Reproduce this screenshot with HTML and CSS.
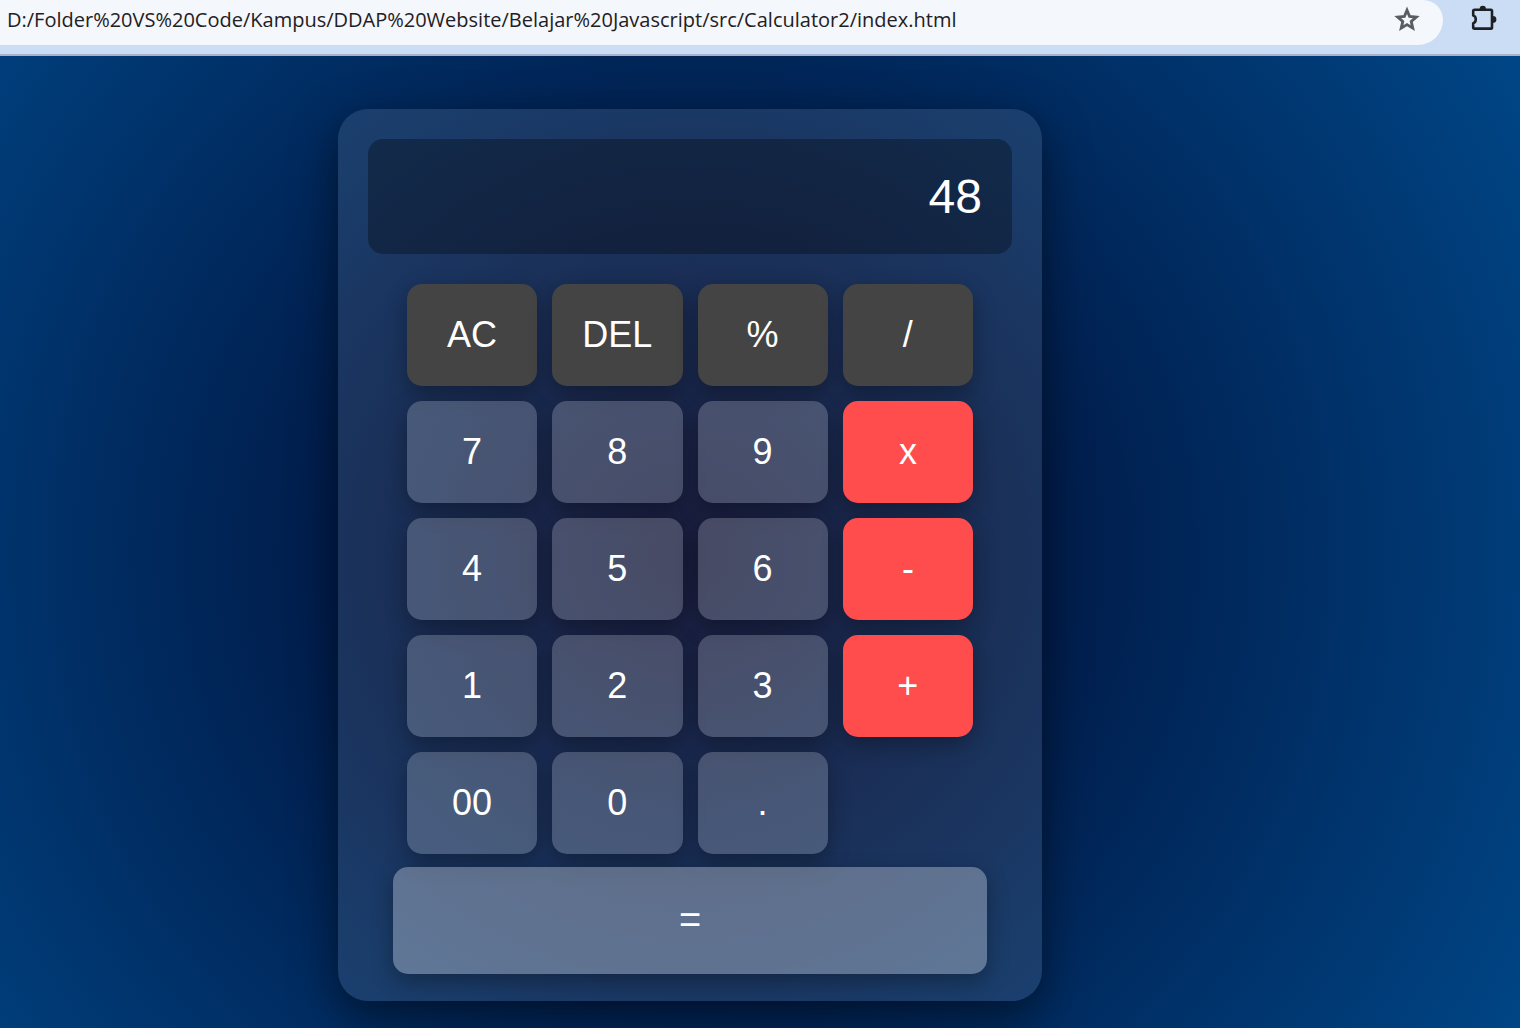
FILE: index.html
```html
<!DOCTYPE html>
<html lang="en">
<head>
  <meta charset="utf-8">
  <meta name="viewport" content="width=device-width, initial-scale=1">
  <title>Calculator</title>
  <link rel="stylesheet" href="styles.css">
</head>
<body>
  <header class="toolbar">
    <div class="address">
      <input class="address-input" type="text" aria-label="Address" value="D:/Folder%20VS%20Code/Kampus/DDAP%20Website/Belajar%20Javascript/src/Calculator2/index.html">
      <button class="icon-button" type="button" aria-label="Bookmark this page">
        <svg width="30" height="30" viewBox="0 0 24 24" aria-hidden="true">
          <path fill="none" stroke="#5b5d61" stroke-width="2.3" d="M12 4.2l2.1 5 5.3.5-4 3.5 1.2 5.3-4.6-2.8-4.6 2.8 1.2-5.3-4-3.5 5.3-.5z"/>
        </svg>
      </button>
    </div>
    <button class="icon-button" type="button" aria-label="Extensions">
      <svg width="28" height="28" viewBox="0 0 28 28" aria-hidden="true">
        <path fill="none" stroke="#1f2023" stroke-width="2.6" stroke-linejoin="round" d="M4.6 4.8H20.8Q22 4.8 22 6V22.4Q22 23.6 20.8 23.6H4.4Q3.2 23.6 3.2 22.4V18.2C6.6 17.4 6.6 11.2 3.2 10.4V6Q3.2 4.8 4.6 4.8Z"/>
        <path fill="#1f2023" d="M9.6 4.2a3.2 3.4 0 0 1 6.4 0zM22.8 11a3.6 3.4 0 0 1 0 6.8z"/>
      </svg>
    </button>
  </header>
  <main class="stage">
    <section class="calculator" aria-label="Calculator">
      <input class="display" type="text" aria-label="Result" value="48" readonly>
      <div class="keys">
        <button class="key key-function" type="button">AC</button>
        <button class="key key-function" type="button">DEL</button>
        <button class="key key-function" type="button">%</button>
        <button class="key key-function" type="button">/</button>
        <button class="key" type="button">7</button>
        <button class="key" type="button">8</button>
        <button class="key" type="button">9</button>
        <button class="key key-operator" type="button">x</button>
        <button class="key" type="button">4</button>
        <button class="key" type="button">5</button>
        <button class="key" type="button">6</button>
        <button class="key key-operator" type="button">-</button>
        <button class="key" type="button">1</button>
        <button class="key" type="button">2</button>
        <button class="key" type="button">3</button>
        <button class="key key-operator" type="button">+</button>
        <button class="key" type="button">00</button>
        <button class="key" type="button">0</button>
        <button class="key" type="button">.</button>
        <button class="key key-equals" type="button">=</button>
      </div>
    </section>
  </main>
</body>
</html>
```
FILE: styles.css
```css
* {
  box-sizing: border-box;
}

body {
  margin: 0;
  min-height: 100vh;
  display: flex;
  flex-direction: column;
  overflow-x: hidden;
  font-family: "Liberation Sans", Arial, sans-serif;
}

button,
input {
  margin: 0;
  padding: 0;
  border: 0;
  font-family: inherit;
}

.toolbar {
  display: flex;
  align-items: flex-start;
  gap: 27px;
  height: 56px;
  padding-right: 22px;
  background: #cbdcf5;
  border-bottom: 2px solid #a8b3cb;
}

.address {
  flex: 1;
  display: flex;
  align-items: center;
  height: 45px;
  padding: 0 21px 5px 7px;
  background: #f4f7fc;
  border-radius: 0 20px 25px 0;
}

.address-input {
  flex: 1;
  min-width: 0;
  background: transparent;
  color: #1f2023;
  font-family: "Open Sans", "Noto Sans", sans-serif;
  font-size: 20px;
  line-height: 28px;
  outline: none;
}

.icon-button {
  display: flex;
  background: transparent;
  cursor: pointer;
}

.toolbar > .icon-button {
  padding-top: 5px;
}

.stage {
  flex: 1;
  display: flex;
  justify-content: center;
  align-items: flex-start;
  padding: 53px 140px 27px 0;
  background: radial-gradient(circle 1082px at calc(50% - 70px) 499px, #000428, #004e92);
}

.calculator {
  width: 704px;
  padding: 30px;
  border-radius: 30px;
  background: rgba(255, 255, 255, 0.1);
  box-shadow: 0 15px 45px rgba(0, 0, 0, 0.5);
}

.display {
  display: block;
  width: 100%;
  height: 115px;
  margin-bottom: 30px;
  padding: 0 30px;
  border-radius: 15px;
  background: rgba(0, 0, 0, 0.3);
  color: #fff;
  font-size: 48px;
  text-align: right;
  outline: none;
}

.keys {
  display: grid;
  grid-template-columns: repeat(4, 1fr);
  grid-auto-rows: 102px;
  gap: 15px;
  margin: 0 39px;
}

.key {
  border-radius: 15px;
  background: rgba(255, 255, 255, 0.2);
  box-shadow: 0 8px 22px rgba(0, 0, 0, 0.3);
  color: #fff;
  font-size: 36px;
  cursor: pointer;
}

.key-function {
  background: #444;
}

.key-operator {
  background: #ff4d4d;
}

.key-equals {
  grid-column: 1 / -1;
  margin: -2px -14px -3px;
  background: rgba(255, 255, 255, 0.3);
  font-size: 38px;
}
```
